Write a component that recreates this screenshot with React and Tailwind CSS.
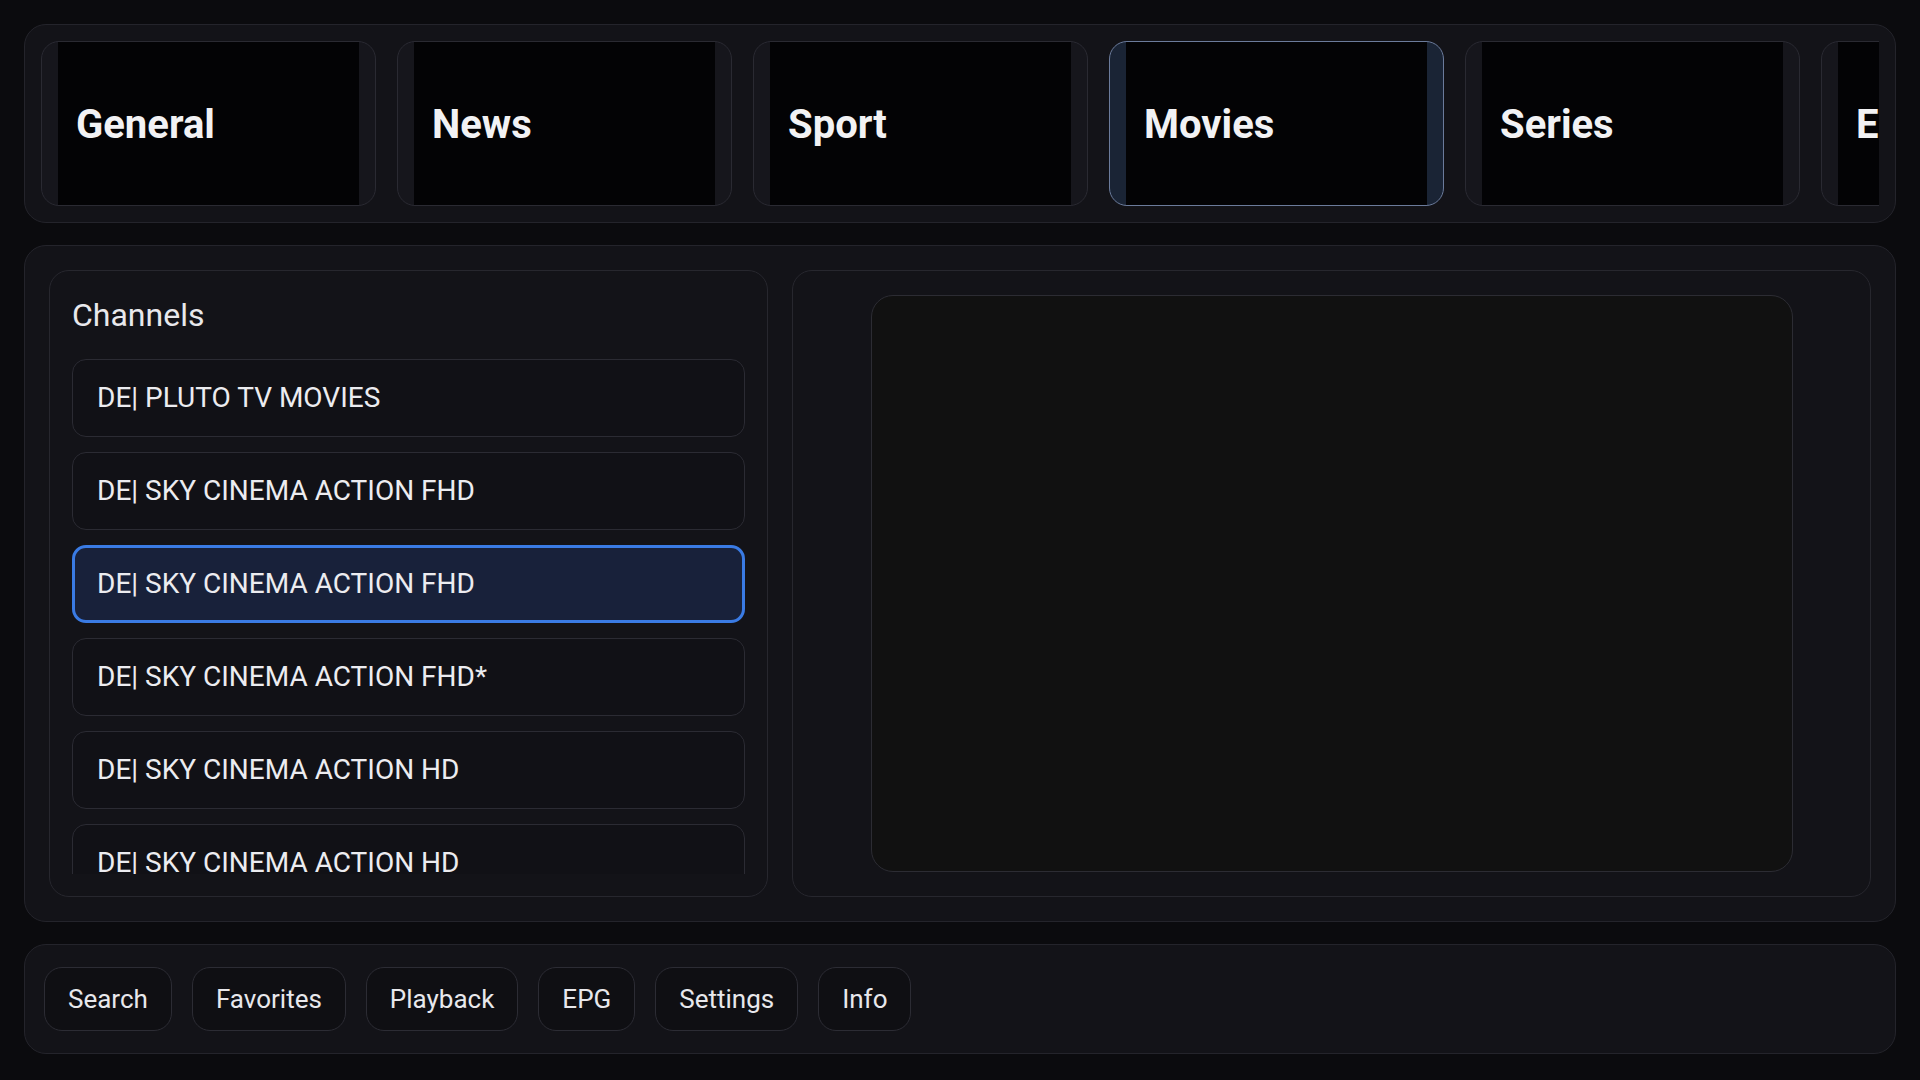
import React from 'react';

const categories = ['General', 'News', 'Sport', 'Movies', 'Series', 'Entertainment'];

const channels = [
  'DE| PLUTO TV MOVIES',
  'DE| SKY CINEMA ACTION FHD',
  'DE| SKY CINEMA ACTION FHD',
  'DE| SKY CINEMA ACTION FHD*',
  'DE| SKY CINEMA ACTION HD',
  'DE| SKY CINEMA ACTION HD',
];

const actions = ['Search', 'Favorites', 'Playback', 'EPG', 'Settings', 'Info'];

function CategoryTab({ label, active }) {
  return (
    <div
      className={
        active
          ? 'shrink-0 w-[335px] h-full rounded-[18px] border border-[#6b7b9b] bg-[#1a2435] overflow-hidden'
          : 'shrink-0 w-[335px] h-full rounded-[18px] border border-[#2a2a32] bg-[#16161c] overflow-hidden'
      }
    >
      <div className="mx-4 h-full bg-[#030305] flex items-center pl-[18px] pt-[2px]">
        <span className="text-[40px] font-bold text-[#f2f2f4] whitespace-nowrap">{label}</span>
      </div>
    </div>
  );
}

function ChannelRow({ name, selected }) {
  return (
    <div
      className={
        selected
          ? 'shrink-0 h-[78px] rounded-[14px] border-[3px] border-[#3a7be4] bg-[#18213a] flex items-center px-[22px]'
          : 'shrink-0 h-[78px] rounded-[14px] border border-[#2b2b33] bg-[#111116] flex items-center px-6'
      }
    >
      <span className="text-[28px] text-[#ececf0] whitespace-nowrap">{name}</span>
    </div>
  );
}

export default function App() {
  return (
    <div
      className="h-screen w-full bg-[#0b0b0e] px-6 pt-6 pb-[26px] flex flex-col gap-[22px] overflow-hidden"
      style={{ fontFamily: 'Roboto, "Noto Sans", sans-serif' }}
    >
      {/* category strip */}
      <div className="h-[199px] shrink-0 rounded-[22px] border border-[#24242b] bg-[#131318] p-4">
        <div className="h-full flex gap-[21px] overflow-hidden">
          {categories.map((c) => (
            <CategoryTab key={c} label={c} active={c === 'Movies'} />
          ))}
        </div>
      </div>

      {/* main area */}
      <div className="flex-1 min-h-0 rounded-[22px] border border-[#24242b] bg-[#131318] p-6 grid grid-cols-[2fr_3fr] gap-6">
        <div className="min-h-0 rounded-[20px] border border-[#27272e] bg-[#131318] px-[22px] pt-[25px] pb-[22px] flex flex-col">
          <h2 className="text-[32px] leading-[38px] text-[#e8e8ec]">Channels</h2>
          <div className="mt-[25px] flex-1 min-h-0 overflow-hidden flex flex-col gap-[15px]">
            {channels.map((name, i) => (
              <ChannelRow key={i} name={name} selected={i === 2} />
            ))}
          </div>
        </div>

        <div className="min-h-0 rounded-[20px] border border-[#27272e] bg-[#131318] py-6 flex justify-center">
          <div className="w-[922px] h-full rounded-[22px] border border-[#2c2c33] bg-[#111111]" />
        </div>
      </div>

      {/* bottom actions */}
      <div className="h-[110px] shrink-0 rounded-[22px] border border-[#24242b] bg-[#131318] pl-[19px] pr-5 flex items-center gap-5">
        {actions.map((a) => (
          <button
            key={a}
            className="h-16 px-[23px] rounded-[18px] border border-[#2c2c34] bg-[#0f0f13] text-[26px] text-[#e8e8ec]"
          >
            {a}
          </button>
        ))}
      </div>
    </div>
  );
}
